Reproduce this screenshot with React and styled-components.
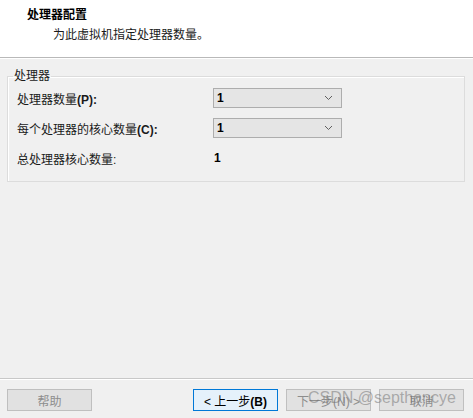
import React from "react";
import styled, { createGlobalStyle } from "styled-components";

const GlobalStyle = createGlobalStyle`
  html, body {
    margin: 0;
    padding: 0;
    background: #f0f0f0;
  }
  body {
    font-family: "Liberation Sans", "Noto Sans CJK SC", sans-serif;
    font-size: 12px;
    color: #000;
  }
`;

const rows = [
  { label: "处理器数量", key: "P", value: "1", select: true },
  { label: "每个处理器的核心数量", key: "C", value: "1", select: true },
  { label: "总处理器核心数量:", value: "1", select: false },
];

const Chevron = () => (
  <svg width="9" height="6" viewBox="0 0 9 6">
    <path d="M1 1 L4.5 4.5 L8 1" fill="none" stroke="#606060" strokeWidth="1" />
  </svg>
);

const App = () => {
  return (
    <Wizard>
      <GlobalStyle />
      <Header>
        <Title>处理器配置</Title>
        <Subtitle>为此虚拟机指定处理器数量。</Subtitle>
      </Header>
      <Body>
        <Group>
          <Legend>处理器</Legend>
          {rows.map((r) => (
            <Row key={r.label}>
              <Label>
                {r.label}
                {r.key && <Latin>({r.key}):</Latin>}
              </Label>
              {r.select ? (
                <Select>
                  <Latin>{r.value}</Latin>
                  <Chevron />
                </Select>
              ) : (
                <Value>{r.value}</Value>
              )}
            </Row>
          ))}
        </Group>
      </Body>
      <Footer>
        <Button disabled>帮助</Button>
        <RightButtons>
          <Button primary>
            &lt; 上一步<Latin>(B)</Latin>
          </Button>
          <Button disabled>下一步(N) &gt;</Button>
          <Button disabled>取消</Button>
        </RightButtons>
        <Watermark>CSDN @septhancye</Watermark>
      </Footer>
    </Wizard>
  );
};

export default App;

const Wizard = styled.div`
  width: 473px;
  height: 418px;
  display: flex;
  flex-direction: column;
  background: #f0f0f0;
  overflow: hidden;
`;

const Header = styled.div`
  height: 58px;
  background: #ffffff;
  border-bottom: 1px solid #b9b9b9;
  padding: 7px 0 0 27px;
  box-sizing: border-box;
`;

const Title = styled.div`
  font-weight: bold;
  font-size: 12px;
  line-height: 17px;
`;

const Subtitle = styled.div`
  margin-top: 3px;
  padding-left: 26px;
  line-height: 17px;
  color: #1a1a1a;
`;

const Body = styled.div`
  flex: 1;
  padding: 10px 8px 0 7px;
  border-top: 1px solid #ffffff;
`;

const Group = styled.fieldset`
  margin: 0;
  padding: 0 0 8px 9px;
  border: 1px solid #dcdcdc;
  box-shadow: inset 1px 1px 0 #ffffff;
  min-width: 0;
`;

const Legend = styled.legend`
  padding: 0 1px;
  margin-left: -4px;
  line-height: 14px;
  color: #1a1a1a;
`;

const Row = styled.div`
  display: flex;
  align-items: center;
  height: 30px;
`;

const Label = styled.div`
  width: 196px;
  color: #1a1a1a;
`;

const Latin = styled.span`
  font-family: "Liberation Sans", sans-serif;
  font-size: 12px;
  font-weight: bold;
`;

const Select = styled.div`
  width: 129px;
  height: 20px;
  box-sizing: border-box;
  border: 1px solid #adadad;
  background: #e5e5e5;
  display: flex;
  align-items: center;
  justify-content: space-between;
  padding: 0 8px 0 3px;
`;

const Value = styled.div`
  padding-left: 1px;
  font-family: "Liberation Sans", sans-serif;
  font-weight: bold;
`;

const Footer = styled.div`
  position: relative;
  height: 40px;
  border-top: 1px solid #c8c8c8;
  box-shadow: inset 0 1px 0 #ffffff;
  display: flex;
  align-items: flex-start;
  justify-content: space-between;
  padding: 10px 9px 0 7px;
  box-sizing: border-box;
`;

const RightButtons = styled.div`
  display: flex;
  gap: 8px;
`;

const Button = styled.button`
  width: 85px;
  height: 22px;
  box-sizing: border-box;
  font-family: "Liberation Sans", "Noto Sans CJK SC", sans-serif;
  font-size: 12px;
  padding: 0;
  border: 1px solid ${(p) => (p.primary ? "#0078d7" : "#bfbfbf")};
  background: ${(p) => (p.primary ? "#e5f1fb" : "#e1e1e1")};
  color: ${(p) => (p.disabled ? "#8d8d8d" : "#000")};
`;

const Watermark = styled.div`
  position: absolute;
  left: 308px;
  top: 10px;
  font-family: "Liberation Sans", sans-serif;
  font-size: 16px;
  color: rgba(110, 110, 110, 0.5);
  pointer-events: none;
`;
